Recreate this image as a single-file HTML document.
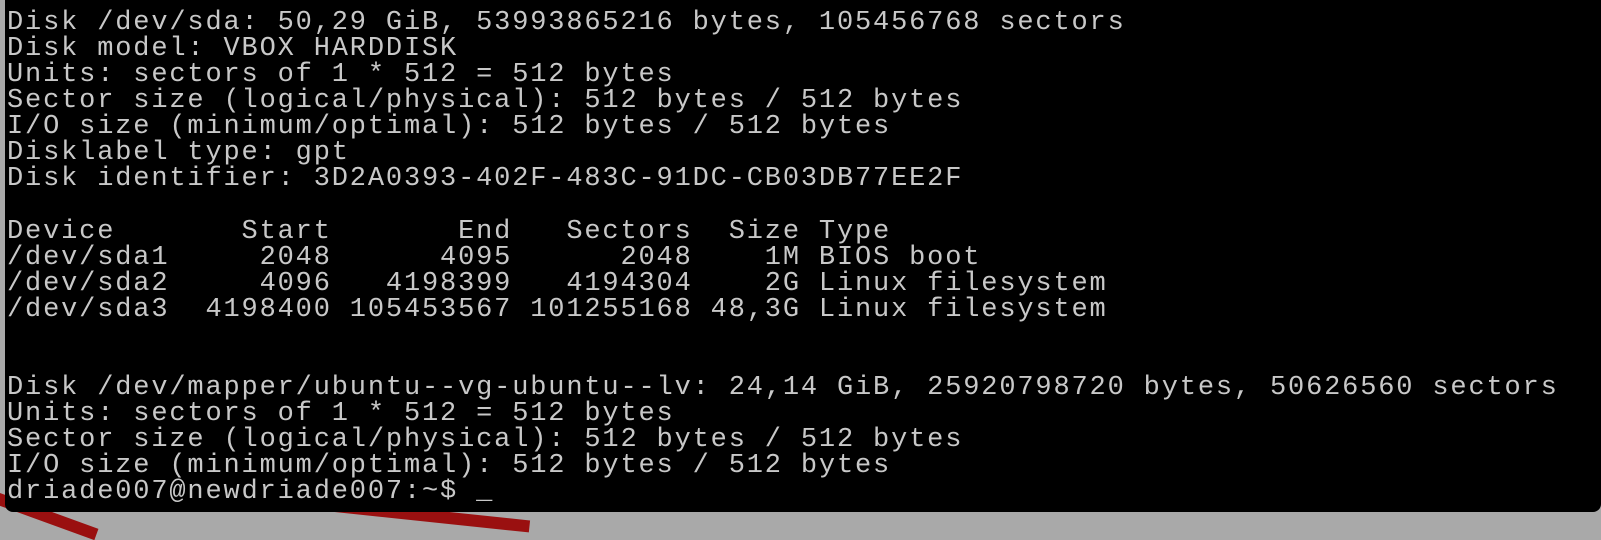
<!DOCTYPE html>
<html><head><meta charset="utf-8"><style>
html,body{margin:0;padding:0;width:1601px;height:517px;overflow:hidden;background:#a9a9a9;}
.stripe{position:absolute;background:#9a1010;height:12px;width:120px;transform:rotate(20deg);}
.term{position:absolute;left:5px;top:0;width:1596px;height:512px;background:#000;border-radius:0 0 8px 8px;}
pre{margin:0;position:absolute;left:7px;top:10px;font-family:"Liberation Mono",monospace;font-size:27px;letter-spacing:1.84px;line-height:26.07px;color:#c8c8c8;}
</style></head><body>
<div class="stripe" style="left:-20px;top:508px;"></div>
<div class="stripe" style="left:330px;top:510px;width:200px;transform:rotate(6deg)"></div>
<div class="term"></div>
<pre>Disk /dev/sda: 50,29 GiB, 53993865216 bytes, 105456768 sectors
Disk model: VBOX HARDDISK
Units: sectors of 1 * 512 = 512 bytes
Sector size (logical/physical): 512 bytes / 512 bytes
I/O size (minimum/optimal): 512 bytes / 512 bytes
Disklabel type: gpt
Disk identifier: 3D2A0393-402F-483C-91DC-CB03DB77EE2F

Device       Start       End   Sectors  Size Type
/dev/sda1     2048      4095      2048    1M BIOS boot
/dev/sda2     4096   4198399   4194304    2G Linux filesystem
/dev/sda3  4198400 105453567 101255168 48,3G Linux filesystem


Disk /dev/mapper/ubuntu--vg-ubuntu--lv: 24,14 GiB, 25920798720 bytes, 50626560 sectors
Units: sectors of 1 * 512 = 512 bytes
Sector size (logical/physical): 512 bytes / 512 bytes
I/O size (minimum/optimal): 512 bytes / 512 bytes
driade007@newdriade007:~$ _</pre>
</body></html>
